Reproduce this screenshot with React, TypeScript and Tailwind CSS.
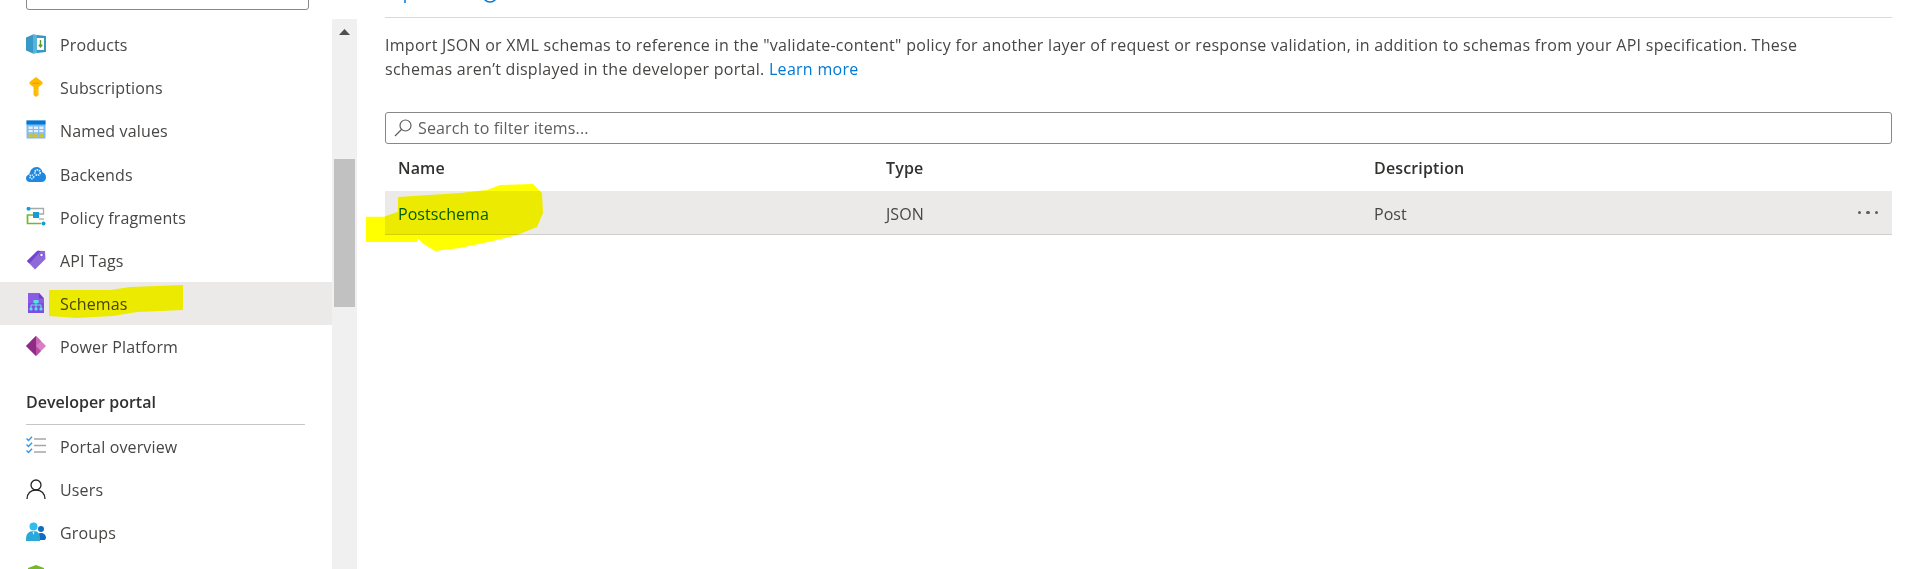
import React from "react";

const Products = () => (
  <svg width="20" height="20" viewBox="0 0 20 20">
    <path d="M0 3.5 7 .5 20 2v16L7 19.5 0 16.5z" fill="#3999c6" />
    <path d="M11 4h7v12h-7z" fill="#fff" />
    <path d="M14.5 6v6.5M12.8 10.8l1.7 2 1.7-2" stroke="#5ea122" strokeWidth="1.4" fill="none" />
    <path d="M7 .5 11 1v18l-4 .5z" fill="#59b4d9" />
  </svg>
);
const KeyIcon = () => (
  <svg width="20" height="20" viewBox="0 0 20 20">
    <path d="M10 0 16.500 5v2L12.500 10v8L10 20 7.500 18V10L3.500 7V5z" fill="#ffb900" />
    <path d="M6.500 6.300h7" stroke="#ea9f00" strokeWidth="1.200" />
    <path d="M12.500 13H10.500M12.500 16H10.500" stroke="#ffd75e" strokeWidth="1" />
  </svg>
);
const NamedValues = () => (
  <svg width="20" height="20" viewBox="0 0 20 20">
    <rect x="0.5" y="0.5" width="19" height="18" fill="#7fbaf0" />
    <rect x="0.5" y="0.5" width="19" height="4" fill="#0078d4" />
    <path d="M2.5 6.5h4.2v2.4H2.5zM7.9 6.5h4.2v2.4H7.9zM13.3 6.5h4.2v2.4h-4.2zM2.5 10h4.2v2.2H2.5zM7.9 10h4.2v2.2H7.9zM13.3 10h4.2v2.2h-4.2z" fill="#e3effa" />
    <path d="M2.5 13.2h4.2v1.6H2.5zM7.9 13.2h4.2v1.6H7.9zM13.3 13.2h4.2v1.6h-4.2zM2.5 15.4h4.2v1.6H2.5zM7.9 15.4h4.2v1.6H7.9zM13.3 15.4h4.2v1.6h-4.2z" fill="#d9c32c" />
  </svg>
);
const Backends = () => (
  <svg width="20" height="20" viewBox="0 0 20 20">
    <path d="M4 18C1.6 18 0 16.4 0 14.2 0 12 1.6 10.600 3.400 10.400 4 6 7 3 10.500 3c3 0 5.400 2 6 5.200 2.100.5 3.500 2.500 3.500 5 0 2.800-1.900 4.800-4.500 4.800z" fill="#1e88e0" />
    <circle cx="11.500" cy="8.500" r="2.700" fill="none" stroke="#d8ecfb" strokeWidth="1.800" strokeDasharray="1.500 .8" />
    <circle cx="5.800" cy="12.800" r="1.900" fill="none" stroke="#d8ecfb" strokeWidth="1.500" strokeDasharray="1.300 .7" />
  </svg>
);
const Policy = () => (
  <svg width="20" height="20" viewBox="0 0 20 20">
    <path d="M3 1.500h14.500V7H13" stroke="#a9a9a9" strokeWidth="1.300" fill="none" />
    <path d="M9 8H1.500v8.500H15" stroke="#76b82a" strokeWidth="1.700" fill="none" />
    <path d="M13 12h5" stroke="#a9a9a9" strokeWidth="1.300" />
    <rect x="7" y="5" width="6" height="6" fill="#1a9bd8" />
    <circle cx="2.500" cy="1.800" r="2" fill="#1a9bd8" />
    <circle cx="17.500" cy="16.500" r="2" fill="#1a9bd8" />
  </svg>
);
const ApiTags = () => (
  <svg width="20" height="20" viewBox="0 0 20 20">
    <path d="M1 11 11.500.8 19 1l.5 8L9 19.500z" fill="#8d6ad8" />
    <path d="M1 11 11.500.8l3 .2L3.500 13.500z" fill="#7341d4" />
    <circle cx="15.500" cy="5" r="1.700" fill="#fff" stroke="#5c2db8" strokeWidth="0.700" />
  </svg>
);
const SchemaIcon = () => (
  <svg width="20" height="20" viewBox="0 0 20 20">
    <path d="M2 0h11l5 5.500V20H2z" fill="#8c5be6" />
    <path d="M13 0l5 5.500h-5z" fill="#6d3fc4" />
    <path d="M2 10h16v10H2z" fill="#7d4ee0" />
    <path d="M10 9v3M5 15v-3h10v3M10 12v3" stroke="#5fe0e0" strokeWidth="1" fill="none" />
    <rect x="7.500" y="7" width="5" height="3.200" fill="#50e6e6" />
    <rect x="3.500" y="14.500" width="3" height="3" rx="1.300" fill="#50e6e6" />
    <rect x="8.500" y="14.500" width="3" height="3" rx="1.300" fill="#50e6e6" />
    <rect x="13.500" y="14.500" width="3" height="3" rx="1.300" fill="#50e6e6" />
  </svg>
);
const PowerIcon = () => (
  <svg width="20" height="20" viewBox="0 0 20 20">
    <path d="M10 0 20 10 10 20 0 10z" fill="#d77fc4" />
    <path d="M10 0 15 5 10 10 5 5z" fill="#c768b3" />
    <path d="M10 0 10 20 0 10z" fill="#8f2a85" />
    <path d="M10 10 15 15 10 20z" fill="#b94da6" />
  </svg>
);
const Overview = () => (
  <svg width="20" height="20" viewBox="0 0 20 20">
    <path d="M.500 2.500 2.500 4.500 6 .8M.500 8.500 2.500 10.500 6 6.800M.500 14.500 2.500 16.500 6 12.800" stroke="#3a96e8" strokeWidth="1.500" fill="none" />
    <path d="M8 3h12M8 9.500h12M8 16h12" stroke="#a6a6a6" strokeWidth="1.500" />
  </svg>
);
const UserIcon = () => (
  <svg width="20" height="20" viewBox="0 0 20 20">
    <circle cx="10" cy="6" r="5" fill="none" stroke="#252423" strokeWidth="1.300" />
    <path d="M1 20c0-5.500 3.500-9 9-9s9 3.500 9 9" fill="none" stroke="#252423" strokeWidth="1.300" />
  </svg>
);
const Groups = () => (
  <svg width="20" height="20" viewBox="0 0 20 20">
    <circle cx="15" cy="7" r="3" fill="#0f6cc4" />
    <path d="M11 16c0-3.500 1.500-5 4-5s5 1.500 5 5l-1 2h-7z" fill="#0f6cc4" />
    <circle cx="7.500" cy="4.500" r="4" fill="#32bdec" />
    <path d="M0 17c0-5 2.500-8 7.500-8s6.500 3 6.500 8v2H0z" fill="#2aa9d8" />
    <path d="M6.500 9.500h2L7.500 13z" fill="#e8f7fc" />
  </svg>
);
const Identities = () => (
  <svg width="20" height="20" viewBox="0 0 20 20">
    <path d="M2 3 10 0l8 3v10c0 3-4 6-8 7-4-1-8-4-8-7z" fill="#76b82a" />
  </svg>
);

const Row = ({ icon, label, active }: { icon: React.ReactNode; label: string; active?: boolean }) => (
  <div className={`flex h-[43.2px] items-center pl-[26px] ${active ? "bg-[#ebeae9]" : ""}`}>
    <span className="flex w-[34px] shrink-0">{icon}</span>
    <span className="pt-[2px]">{label}</span>
  </div>
);

export default function App() {
  return (
    <div className="relative flex h-[569px] w-[1907px] overflow-hidden bg-white text-[16px] font-normal text-[#484644] [font-family:'Open_Sans',sans-serif]">
      <aside className="w-[332px] shrink-0 tracking-[0.15px]">
        <div className="mx-[26px] -mt-[23px] flex h-[32.500px] w-[283px] items-center rounded-[3px] border border-[#8a8886] pb-[4px] pl-[8px]">
          <svg width="14" height="14" viewBox="0 0 14 14" className="mr-[6px]">
            <circle cx="8.500" cy="5.500" r="4.500" fill="none" stroke="#0078d4" strokeWidth="1.300" />
            <path d="M5 9 1 13" stroke="#0078d4" strokeWidth="1.300" />
          </svg>
          <span className="text-[#605e5c]">Search (Ctrl+/)</span>
        </div>
        <div className="mt-[13px]">
          <Row icon={<Products />} label="Products" />
          <Row icon={<KeyIcon />} label="Subscriptions" />
          <Row icon={<NamedValues />} label="Named values" />
          <Row icon={<Backends />} label="Backends" />
          <Row icon={<Policy />} label="Policy fragments" />
          <Row icon={<ApiTags />} label="API Tags" />
          <Row icon={<SchemaIcon />} label="Schemas" active />
          <Row icon={<PowerIcon />} label="Power Platform" />
        </div>
        <div className="mx-[26px] mt-[22px] w-[279px] border-b border-[#c8c6c4] pb-[10px] font-semibold leading-[24px] tracking-[0px] text-[#323130]">
          Developer portal
        </div>
        <div className="-mt-[1px]">
          <Row icon={<Overview />} label="Portal overview" />
          <Row icon={<UserIcon />} label="Users" />
          <Row icon={<Groups />} label="Groups" />
          <Row icon={<Identities />} label="Identities" />
        </div>
      </aside>

      <div className="mt-[19px] flex h-[550px] w-[25px] shrink-0 flex-col items-center bg-[#f0f0f0]">
        <svg width="11" height="6" viewBox="0 0 11 6" className="mt-[10px]">
          <path d="M5.500 0 11 6H0z" fill="#505050" />
        </svg>
        <div className="mt-[124px] h-[148px] w-[21px] bg-[#c1c1c1]" />
      </div>

      <main className="ml-[28px] w-[1507px] shrink-0">
        <div className="h-[18px] border-b border-[#d9d9d9]">
          <svg width="120" height="3" viewBox="0 0 120 3" className="block">
            <path d="M20 0v3" stroke="#0078d4" strokeWidth="1.500" />
            <circle cx="105" cy="-5" r="7" fill="none" stroke="#0078d4" strokeWidth="1.500" />
          </svg>
        </div>
        <p className="mt-[15px] leading-[24px] tracking-[0.28px]">
          Import JSON or XML schemas to reference in the "validate-content" policy for another layer of request or response validation, in addition to schemas from your API specification. These
          <br />
          schemas aren’t displayed in the developer portal. <span className="text-[#0078d4]">Learn more</span>
        </p>
        <div className="mt-[31px] flex h-[32px] items-center rounded-[3px] border border-[#8a8886] pl-[8px]">
          <svg width="18" height="18" viewBox="0 0 18 18" className="mr-[6px]">
            <circle cx="11.500" cy="6.500" r="5.500" fill="none" stroke="#605e5c" strokeWidth="1.200" />
            <path d="M7.500 10.500 1 17" stroke="#605e5c" strokeWidth="1.200" />
          </svg>
          <span className="tracking-[0.15px] text-[#605e5c]">Search to filter items...</span>
        </div>
        <div className="grid h-[47px] grid-cols-[488px_488px_1fr] items-center pl-[13px] font-semibold tracking-[0.15px] text-[#323130]">
          <span>Name</span>
          <span>Type</span>
          <span>Description</span>
        </div>
        <div className="grid h-[44px] grid-cols-[488px_488px_1fr] items-center border-b border-[#d2d0ce] bg-[#ebeae9] pl-[13px] pt-[3px] tracking-[0.05px]">
          <span className="text-[#005a9e]">Postschema</span>
          <span>JSON</span>
          <div className="flex items-center justify-between pr-[14px]">
            <span>Post</span>
            <div className="flex gap-[5px] pb-[3px]">
              <span className="h-[3.500px] w-[3.500px] rounded-full bg-[#605e5c]" />
              <span className="h-[3.500px] w-[3.500px] rounded-full bg-[#605e5c]" />
              <span className="h-[3.500px] w-[3.500px] rounded-full bg-[#605e5c]" />
            </div>
          </div>
        </div>
      </main>

      <svg className="pointer-events-none absolute left-0 top-0 mix-blend-multiply" width="1907" height="569" viewBox="0 0 1907 569">
        <path d="M49 290 110 290 130 287 183 285 183 310 137 312 113 316 77 318 49 316z" fill="#ffff00" />
        <path d="M366 216.700H384L398 211.700V197L460 193 487 190 500 185 533 184 542 193 543 213 537 227 517 235 493 241 460 248 435 251 425 245 417 238V242H366z" fill="#ffff00" />
      </svg>
    </div>
  );
}
